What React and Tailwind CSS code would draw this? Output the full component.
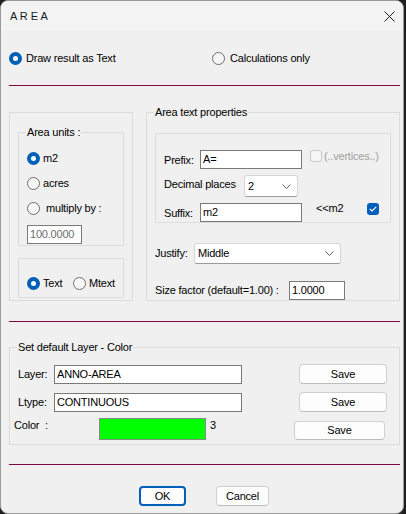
import React from 'react';

const FONT = { fontFamily: '"Liberation Sans", Arial, sans-serif' };

const Radio = ({ checked }) =>
  checked ? (
    <span className="w-[13px] h-[13px] rounded-full bg-[#005fb8] flex items-center justify-center shrink-0">
      <span className="w-[5px] h-[5px] rounded-full bg-white" />
    </span>
  ) : (
    <span className="w-[13px] h-[13px] rounded-full border border-[#6f6f6f] bg-[#f6f6f6] shrink-0" />
  );

const GroupBox = ({ title, className, children }) => (
  <div className={`relative border border-[#dcdcdc] ${className}`}>
    {title && (
      <span className="absolute left-[7px] -top-[8px] px-[1px] bg-[#f0f0f0] leading-[14px]">{title}</span>
    )}
    {children}
  </div>
);

const TextBox = ({ value, className, muted }) => (
  <div
    className={`border border-[#7a7a7a] bg-white pl-[2px] flex items-center ${
      muted ? 'text-[#6d6d6d] bg-[#f0f0f0]' : 'text-black'
    } ${className}`}
  >
    {value}
  </div>
);

const Select = ({ value, className }) => (
  <div
    className={`border border-[#d6d6d6] border-b-[#9a9a9a] rounded-[3px] bg-white flex items-center justify-between pl-[3px] pr-[6px] ${className}`}
  >
    <span>{value}</span>
    <svg width="9" height="5" viewBox="0 0 9 5">
      <path d="M0.5 0.5 L4.5 4.5 L8.5 0.5" fill="none" stroke="#5f5f5f" strokeWidth="1" />
    </svg>
  </div>
);

const Button = ({ children, className, primary }) => (
  <div
    className={`rounded-[4px] flex items-center justify-center bg-[#fdfdfd] ${
      primary ? 'border-2 border-[#005fb8]' : 'border border-[#d0d0d0] border-b-[#bdbdbd]'
    } ${className}`}
  >
    {children}
  </div>
);

const Divider = () => <div className="h-[1px] w-[391px] bg-[#7d0a45]" />;

const App = () => {
  return (
    <div className="w-[406px] h-[514px] bg-[#1f1f1f]" style={FONT}>
      <div className="w-[404px] h-[514px] border border-[#9a9a9a] rounded-[8px] overflow-hidden bg-[#f0f0f0] flex flex-col text-[11px] tracking-[-0.2px] text-black">
        {/* title bar */}
        <div className="h-[30px] bg-[#f3f3f3] flex items-center justify-between pl-[9px] pr-[8px] shrink-0">
          <span className="text-[11px] tracking-normal text-[#1a1a1a]">A R E A</span>
          <svg width="11" height="11" viewBox="0 0 11 11">
            <path d="M0.5 0.5 L10.5 10.5 M10.5 0.5 L0.5 10.5" stroke="#1a1a1a" strokeWidth="1" />
          </svg>
        </div>

        <div className="pl-[8px]">
          {/* output mode */}
          <div className="mt-[20px] h-[14px] flex items-center">
            <div className="w-[203px] flex items-center gap-[4px]">
              <Radio checked />
              <span>Draw result as Text</span>
            </div>
            <div className="flex items-center gap-[5px]">
              <Radio />
              <span>Calculations only</span>
            </div>
          </div>

          <div className="mt-[20px]">
            <Divider />
          </div>

          {/* options panels */}
          <div className="mt-[26px] flex items-start">
            <GroupBox className="w-[124px] h-[189px] pl-[8px] pt-[19px]">
              <GroupBox title="Area units :" className="w-[106px] h-[114px] pl-[8px] pt-[13px]">
                <div className="h-[25px] flex items-center gap-[3px]">
                  <Radio checked />
                  <span>m2</span>
                </div>
                <div className="h-[25px] flex items-center gap-[3px]">
                  <Radio />
                  <span>acres</span>
                </div>
                <div className="h-[25px] flex items-center gap-[6px]">
                  <Radio />
                  <span>multiply by :</span>
                </div>
                <TextBox value="100.0000" muted className="mt-[4px] w-[55px] h-[19px]" />
              </GroupBox>
              <GroupBox className="mt-[12px] w-[106px] h-[40px] pl-[8px] pt-[18px]">
                <div className="h-[13px] flex items-center">
                  <Radio checked />
                  <span className="ml-[3px] w-[30px]">Text</span>
                  <Radio />
                  <span className="ml-[3px]">Mtext</span>
                </div>
              </GroupBox>
            </GroupBox>

            <GroupBox title="Area text properties" className="ml-[13px] w-[254px] h-[189px] pl-[8px] pt-[20px]">
              <GroupBox className="w-[236px] h-[90px] pl-[8px]">
                <div className="mt-[16px] flex items-start">
                  <span className="w-[36px] h-[19px] flex items-center mt-[1px]">Prefix:</span>
                  <TextBox value="A=" className="w-[102px] h-[19px]" />
                  <span className="ml-[8px] w-[12px] h-[12px] rounded-[3px] border border-[#c8c8c8] bg-[#f6f6f6]" />
                  <span className="ml-[2px] leading-[12px] text-[#a0a0a0]">(..vertices..)</span>
                </div>
                <div className="mt-[5px] flex items-center">
                  <span className="w-[80px] -mt-[4px]">Decimal places</span>
                  <Select value="2" className="w-[54px] h-[22px]" />
                </div>
                <div className="mt-[6px] flex items-start">
                  <span className="w-[36px] h-[19px] flex items-center mt-[1px]">Suffix:</span>
                  <TextBox value="m2" className="w-[102px] h-[19px]" />
                  <span className="ml-[14px] leading-[12px] mt-[-1px]">&lt;&lt;m2</span>
                  <span className="ml-[24px] w-[12px] h-[12px] rounded-[3px] bg-[#005fb8] flex items-center justify-center">
                    <svg width="8" height="6" viewBox="0 0 8 6">
                      <path d="M0.8 3 L3 5 L7.2 0.8" fill="none" stroke="white" strokeWidth="1.1" />
                    </svg>
                  </span>
                </div>
              </GroupBox>

              <div className="mt-[20px] flex items-start">
                <span className="w-[39px] mt-[2px]">Justify:</span>
                <Select value="Middle" className="w-[147px] h-[21px]" />
              </div>

              <div className="mt-[17px] flex items-center">
                <span className="w-[134px]">Size factor (default=1.00) :</span>
                <TextBox value="1.0000" className="w-[56px] h-[19px]" />
              </div>
            </GroupBox>
          </div>

          <div className="mt-[20px]">
            <Divider />
          </div>

          {/* layer / colour */}
          <GroupBox title="Set default Layer - Color" className="mt-[25px] w-[391px] h-[98px] pt-[16px]">
            <div className="pl-[8px] h-[20px] flex items-center">
              <span className="w-[36px]">Layer:</span>
              <TextBox value="ANNO-AREA" className="w-[188px] h-[19px]" />
              <Button className="ml-[57px] w-[88px] h-[20px]">Save</Button>
            </div>
            <div className="mt-[8px] pl-[8px] h-[20px] flex items-center">
              <span className="w-[36px]">Ltype:</span>
              <TextBox value="CONTINUOUS" className="w-[188px] h-[19px]" />
              <Button className="ml-[57px] w-[88px] h-[20px]">Save</Button>
            </div>
            <div className="mt-[6px] pl-[4px] flex items-start">
              <span className="w-[85px] mt-[-1px]">Color&nbsp; :</span>
              <div className="w-[107px] h-[22px] border border-[#8a8a8a] bg-[#00ff00]" />
              <span className="ml-[4px] mt-[-1px]">3</span>
              <Button className="ml-[78px] mt-[3px] w-[91px] h-[19px]">Save</Button>
            </div>
          </GroupBox>

          <div className="mt-[19px]">
            <Divider />
          </div>

          <div className="mt-[21px] pl-[130px] flex items-center gap-[30px]">
            <Button primary className="w-[47px] h-[20px]">OK</Button>
            <Button className="w-[53px] h-[20px]">Cancel</Button>
          </div>
        </div>
      </div>
    </div>
  );
};

export default App;
